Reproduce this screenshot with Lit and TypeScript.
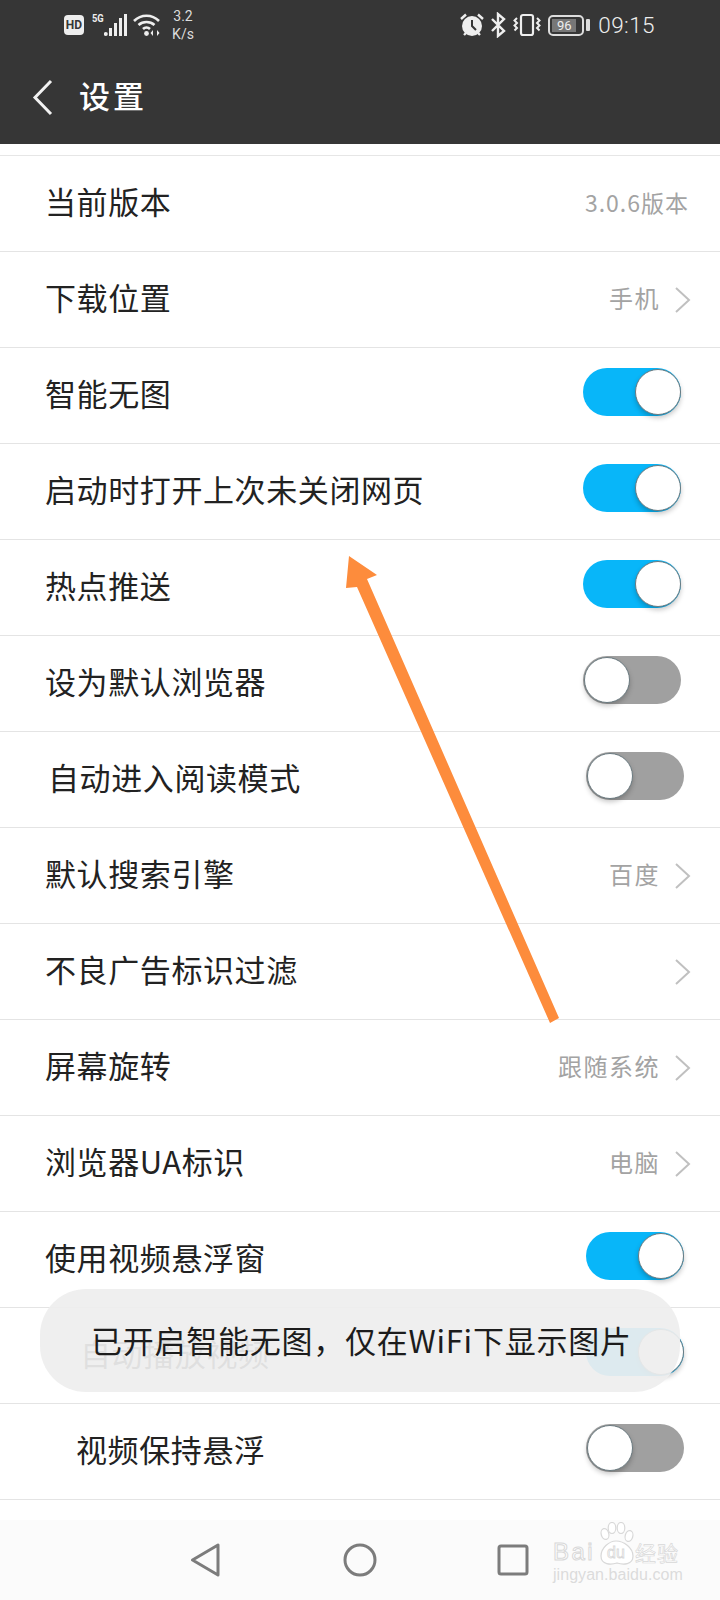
import { LitElement, html, css, svg, nothing } from "lit";
import { customElement } from "lit/decorators.js";

type Row = {
  label: string;
  value?: string;
  chevron?: boolean;
  toggle?: boolean;
  shift?: boolean;
  indent?: "a" | "b" | "c";
};

const rows: Row[] = [
  { label: "当前版本", value: "3.0.6版本" },
  { label: "下载位置", value: "手机", chevron: true },
  { label: "智能无图", toggle: true },
  { label: "启动时打开上次未关闭网页", toggle: true },
  { label: "热点推送", toggle: true },
  { label: "设为默认浏览器", toggle: false },
  { label: "自动进入阅读模式", toggle: false, shift: true, indent: "a" },
  { label: "默认搜索引擎", value: "百度", chevron: true },
  { label: "不良广告标识过滤", chevron: true },
  { label: "屏幕旋转", value: "跟随系统", chevron: true },
  { label: "浏览器UA标识", value: "电脑", chevron: true },
  { label: "使用视频悬浮窗", toggle: true, shift: true },
  { label: "自动播放视频", toggle: true, shift: true, indent: "c" },
  { label: "视频保持悬浮", toggle: false, shift: true, indent: "b" },
];

const chevron = svg`<svg class="chev" width="17" height="28" viewBox="0 0 17 28"><path d="M2 2 L15 14 L2 26" fill="none" stroke="#c0c0c0" stroke-width="2"/></svg>`;

@customElement("app-root")
export class AppRoot extends LitElement {
  static styles = css`
    :host {
      display: block;
      width: 720px;
      height: 1600px;
      position: relative;
      overflow: hidden;
      background: #fff;
      font-family: "Noto Sans CJK SC", "Liberation Sans", sans-serif;
    }
    .page { display: flex; flex-direction: column; height: 1600px; }
    .top { background: #363636; height: 144px; flex: none; color: #eee; }
    .status {
      height: 50px;
      display: flex;
      align-items: center;
      padding: 0 65px 0 64px;
      font-family: Roboto, "Liberation Sans", sans-serif;
    }
    .status svg { display: block; flex: none; }
    .hd {
      width: 20px; height: 20px; border-radius: 4px; background: #eee; color: #363636;
      font-size: 12px; font-weight: 700; line-height: 20px; text-align: center; flex: none;
    }
    .g5 { font-size: 11px; font-weight: 700; line-height: 12px; margin: -13px 0 0 8px; width: 13px; flex: none; transform: scaleX(.85); transform-origin: left; }
    .speed { font-size: 14px; line-height: 18px; text-align: center; width: 24px; margin-left: 10px; color: #ddd; flex: none; }
    .spacer { flex: 1; }
    .time { font-size: 22.5px; line-height: 28px; margin-left: 8px; letter-spacing: 0.4px; font-weight: 300; }
    .bat {
      width: 36px; height: 21px; border: 2px solid #ddd; border-radius: 5px; box-sizing: border-box;
      padding: 2px; flex: none; margin-left: 7px;
    }
    .bat span {
      display: block; width: 24px; height: 13px; background: #777; color: #eee; font-size: 13px; line-height: 13px; text-align: center;
    }
    .cap { width: 4px; height: 12px; border-radius: 1px; background: #ddd; margin-left: 2px; flex: none; }
    .bar { height: 94px; display: flex; align-items: center; padding-left: 32px; }
    .title { font-size: 31px; line-height: 40px; color: #fff; margin: -4px 0 0 26px; letter-spacing: 3px; font-weight: 500; }
    .list { flex: 1; margin-top: 11px; border-top: 1px solid #e6e6e6; }
    .row {
      height: 96px; box-sizing: border-box; border-bottom: 1px solid #e4e4e4;
      display: flex; align-items: center; padding: 0 30px 0 45px;
    }
    .row.a { padding-left: 48px; }
    .row.b { padding-left: 76px; }
    .row.c { padding-left: 80px; }
    .label { flex: 1; font-size: 31px; line-height: 40px; letter-spacing: 0.6px; color: #222; white-space: nowrap; margin-top: -5px; }
    .value { font-size: 24px; letter-spacing: 1.5px; color: #a3a3a3; line-height: 32px; margin-top: -4px; }
    .value.plain { font-size: 23px; letter-spacing: 1px; margin-right: 1px; }
    .chev { margin: 0 -1px 0 14px; display: block; flex: none; }
    .toggle {
      width: 98px; height: 48px; border-radius: 24px; background: #a0a0a0; position: relative;
      margin: -8px 9px 0 0; flex: none;
    }
    .toggle.shift { margin-right: 6px; }
    .toggle.on { background: #08b6f9; }
    .knob {
      position: absolute; top: 1px; left: 1px; width: 46px; height: 46px; border-radius: 50%;
      background: #fff; box-sizing: border-box; border: 1px solid #6a7a80;
      box-shadow: 0 3px 5px rgba(0,0,0,.22);
    }
    .toggle.on .knob { left: 52px; }
    .nav {
      height: 80px; flex: none; background: #fbfbfb; display: flex; align-items: center;
      gap: 122px; padding: 0 0 0 190px; box-sizing: border-box;
    }
    .nav svg { display: block; flex: none; }
    .nav .square { margin-left: -2px; }
    .toast {
      position: absolute; left: 40px; top: 1289px; width: 640px; height: 103px; box-sizing: border-box;
      border-radius: 46px; background: rgba(238,238,238,.93);
      padding: 32px 0 0 51px; font-size: 31px; line-height: 38px; color: #1c1c1c; letter-spacing: 0.75px; white-space: nowrap;
    }
    .arrow { position: absolute; left: 0; top: 0; pointer-events: none; }
    .mark {
      position: absolute; left: 552px; top: 1521px; width: 132px; height: 64px;
      font-family: "Liberation Sans", sans-serif; white-space: nowrap;
    }
    .mark svg { position: absolute; left: 47px; top: 1px; }
    .mark .bai {
      position: absolute; left: 1px; top: 21px; font-size: 24px; line-height: 20px; letter-spacing: 2.5px;
      color: #fff; -webkit-text-stroke: 1px #d8d8d8;
    }
    .mark .du {
      position: absolute; left: 55px; top: 25px; font-size: 16px; line-height: 14px;
      color: #fff; -webkit-text-stroke: .8px #d8d8d8;
    }
    .mark .jy {
      position: absolute; left: 83px; top: 21px; font-family: "Noto Sans CJK SC", sans-serif; font-size: 21px; line-height: 20px;
      color: #fff; -webkit-text-stroke: .7px #d8d8d8; letter-spacing: 1px;
    }
    .mark .url {
      position: absolute; left: 1px; top: 46px; font-size: 16px; line-height: 16px; color: #dcdcdc; letter-spacing: 0.05px;
    }
  `;

  private renderRow(r: Row) {
    return html`<div class="row ${r.indent ?? ""}">
      <span class="label">${r.label}</span>
      ${r.value
        ? html`<span class="value ${r.chevron ? "" : "plain"}">${r.value}</span>`
        : nothing}
      ${r.chevron ? chevron : nothing}
      ${r.toggle !== undefined
        ? html`<span class="toggle ${r.toggle ? "on" : ""} ${r.shift ? "shift" : ""}"><span class="knob"></span></span>`
        : nothing}
    </div>`;
  }

  render() {
    return html`
      <div class="page">
        <div class="top">
          <div class="status">
            <div class="hd">HD</div>
            <div class="g5">5G</div>
            <svg style="margin-left:-1px" width="24" height="24" viewBox="0 0 24 24" fill="#eee">
              <circle cx="1.8" cy="21" r="2"/><rect x="5" y="15" width="3" height="8"/>
              <rect x="10" y="10" width="3" height="13"/><rect x="15" y="5" width="3" height="18"/>
              <rect x="20" y="1" width="3" height="22"/>
            </svg>
            <svg style="margin-left:5px" width="28" height="24" viewBox="0 0 28 24" fill="none" stroke="#eee" stroke-width="2.6">
              <path d="M1 8 C8 1 19 1 26 8"/><path d="M5.5 12 C10 8 17 8 21.5 12"/><path d="M10 16 C12 14 15 14 17 16"/>
              <circle cx="13.5" cy="20.5" r="2.4" fill="#eee" stroke="none"/>
              <path d="M20 17 L20 23 L17.5 20 Z M24 17 L24 23 L26.5 20 Z" fill="#eee" stroke="none"/>
            </svg>
            <div class="speed">3.2<br />K/s</div>
            <div class="spacer"></div>
            <svg width="24" height="24" viewBox="0 0 24 24">
              <circle cx="12" cy="13" r="10" fill="#eee"/>
              <path d="M12 7 V13 L16 17" fill="none" stroke="#363636" stroke-width="2"/>
              <path d="M1 6 L6 1.5 M23 6 L18 1.5 M4 22 L6 20 M20 22 L18 20" stroke="#eee" stroke-width="2.4"/>
            </svg>
            <svg style="margin-left:6px" width="16" height="26" viewBox="0 0 16 26" fill="none" stroke="#eee" stroke-width="2.4">
              <path d="M2 7 L14 19 L8 24 L8 2 L14 7 L2 19"/>
            </svg>
            <svg style="margin-left:7px" width="28" height="24" viewBox="0 0 28 24" fill="none" stroke="#eee" stroke-width="2">
              <rect x="8" y="2" width="12" height="20" rx="2" stroke-width="2.2"/>
              <path d="M4 5 L1.5 7.5 L4 10 L1.5 12.5 L4 15 L1.5 17.5 M24 5 L26.5 7.5 L24 10 L26.5 12.5 L24 15 L26.5 17.5"/>
            </svg>
            <div class="bat"><span>96</span></div>
            <div class="cap"></div>
            <div class="time">09:15</div>
          </div>
          <div class="bar">
            <svg width="21" height="37" viewBox="0 0 21 37"><path d="M19 2 L3 18.5 L19 35" fill="none" stroke="#f2f2f2" stroke-width="3"/></svg>
            <span class="title">设置</span>
          </div>
        </div>
        <div class="list">${rows.map((r) => this.renderRow(r))}</div>
        <div class="nav">
          <svg width="31" height="34" viewBox="0 0 31 34"><path d="M28 2 L28 32 L2.5 17 Z" fill="none" stroke="#7c7c7c" stroke-width="3" stroke-linejoin="round"/></svg>
          <svg width="34" height="34" viewBox="0 0 34 34"><circle cx="17" cy="17" r="15" fill="none" stroke="#7c7c7c" stroke-width="3"/></svg>
          <svg class="square" width="32" height="32" viewBox="0 0 32 32"><rect x="2" y="2" width="28" height="28" rx="2" fill="none" stroke="#7c7c7c" stroke-width="3"/></svg>
        </div>
      </div>
      <svg class="arrow" width="720" height="1600" viewBox="0 0 720 1600">
        <path d="M349 556 L377 575 L367 579 L559 1018 L550 1023 L357 587 L346 588 Z" fill="#fd8c3c"/>
      </svg>
      <div class="toast">已开启智能无图，仅在WiFi下显示图片</div>
      <div class="mark">
        <svg width="36" height="44" viewBox="0 0 36 44" fill="#fff" stroke="#d8d8d8" stroke-width="1.2">
          <ellipse cx="6" cy="12" rx="3.8" ry="5.5" transform="rotate(-15 6 12)"/>
          <ellipse cx="13" cy="6" rx="3.8" ry="5.5"/>
          <ellipse cx="22" cy="6" rx="3.8" ry="5.5"/>
          <ellipse cx="30" cy="14" rx="3.8" ry="5.5" transform="rotate(15 30 14)"/>
          <path d="M2 34 C2 26 10 19 17 19 C25 19 34 26 34 34 C34 43 24 43 18 41 C12 43 2 43 2 34 Z"/>
        </svg>
        <div class="bai">Bai</div>
        <div class="du">du</div>
        <div class="jy">经验</div>
        <div class="url">jingyan.baidu.com</div>
      </div>
    `;
  }
}
